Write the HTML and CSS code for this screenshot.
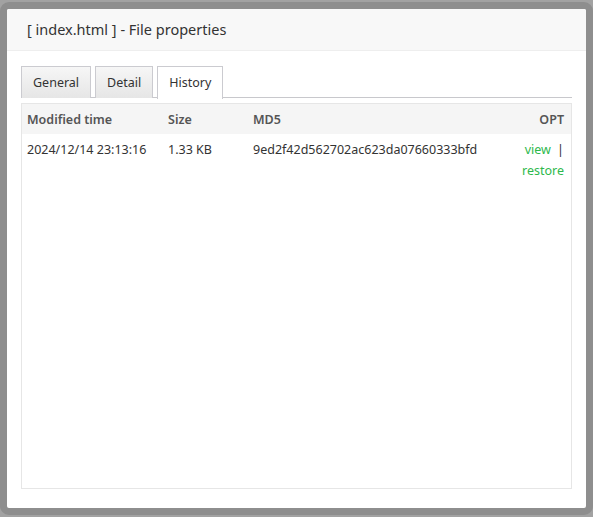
FILE: index.html
```html
<!DOCTYPE html>
<html>
<head>
<meta charset="utf-8">
<link rel="stylesheet" href="styles.css">
</head>
<body>
<div class="backdrop">
  <div class="bg-row"></div>
  <div class="bg-row"></div>
  <div class="bg-row band"></div>
  <div class="bg-row"></div>
  <div class="bg-row"></div>
  <div class="bg-row"></div>
  <div class="bg-row"></div>
  <div class="bg-row"></div>
  <div class="bg-row"></div>
  <div class="bg-row"></div>
  <div class="bg-row"></div>
</div>
<div class="layer">
  <div class="layer-title">[ index.html ] - File properties</div>
  <div class="layer-body">
    <ul class="tabs">
      <li class="tab">General</li>
      <li class="tab">Detail</li>
      <li class="tab active">History</li>
    </ul>
    <div class="panel">
      <table class="hist">
        <thead>
          <tr>
            <th class="c-time">Modified time</th>
            <th class="c-size">Size</th>
            <th class="c-md5">MD5</th>
            <th class="c-opt">OPT</th>
          </tr>
        </thead>
        <tbody>
          <tr>
            <td>2024/12/14 23:13:16</td>
            <td>1.33 KB</td>
            <td>9ed2f42d562702ac623da07660333bfd</td>
            <td class="c-opt"><a class="lnk">view</a> <span class="sep">|</span><br><a class="lnk">restore</a></td>
          </tr>
        </tbody>
      </table>
    </div>
  </div>
</div>
</body>
</html>
```

FILE: styles.css
```css
* { box-sizing: border-box; }
html, body { margin: 0; padding: 0; }
body {
  width: 593px;
  height: 517px;
  overflow: hidden;
  background: #a2a2a2;
  font-family: "Noto Sans", "Open Sans", sans-serif;
  position: relative;
}
.backdrop { display: flex; flex-direction: column; }
.bg-row { height: 45px; border-bottom: 1px solid #979797; flex: none; }
.bg-row:first-child { height: 49px; }
.bg-row.band { background: #8f9590; }

.layer {
  position: absolute;
  left: 0;
  top: 2px;
  width: 593px;
  height: 513px;
  border: 7px solid #8e8e8e;
  border-radius: 9px;
  background: #fff;
  display: flex;
  flex-direction: column;
  overflow: hidden;
}
.layer-title {
  height: 42px;
  flex: none;
  background: #f8f8f8;
  border-bottom: 1px solid #eee;
  padding: 0 0 0 20px;
  line-height: 41px;
  font-size: 14.5px;
  color: #333;
}
.layer-body {
  flex: 1;
  padding: 15px 14px 19px 14px;
  display: flex;
  flex-direction: column;
}
.tabs {
  list-style: none;
  margin: 0;
  padding: 0;
  display: flex;
  gap: 4px;
  border-bottom: 1px solid #c8c8cc;
  height: 32px;
  flex: none;
}
.tab {
  height: 32px;
  padding: 0 11px;
  line-height: 31px;
  font-size: 12.5px;
  color: #333;
  border: 1px solid #cbcbd0;
  border-bottom: none;
  background: linear-gradient(#f6f6f6, #e6e6e6);
}
.tab.active {
  background: #fff;
  height: 33px;
  position: relative;
  z-index: 1;
}
.panel {
  margin-top: 5px;
  flex: 1;
  border: 1px solid #e6e6e6;
}
.hist {
  width: 100%;
  border-collapse: collapse;
  font-size: 12.5px;
  color: #333;
}
.hist th {
  background: #f5f5f5;
  height: 30px;
  text-align: left;
  font-weight: 600;
  color: #555;
  padding: 0 5px;
}
.hist td {
  vertical-align: top;
  padding: 5px 5px 0 5px;
  line-height: 21px;
}
.hist .c-opt { text-align: right; padding-right: 7px; }
.c-time { width: 141px; }
.c-size { width: 85px; }
.lnk { color: #2db84c; }
.sep { color: #333; margin-left: 3px; }
```
